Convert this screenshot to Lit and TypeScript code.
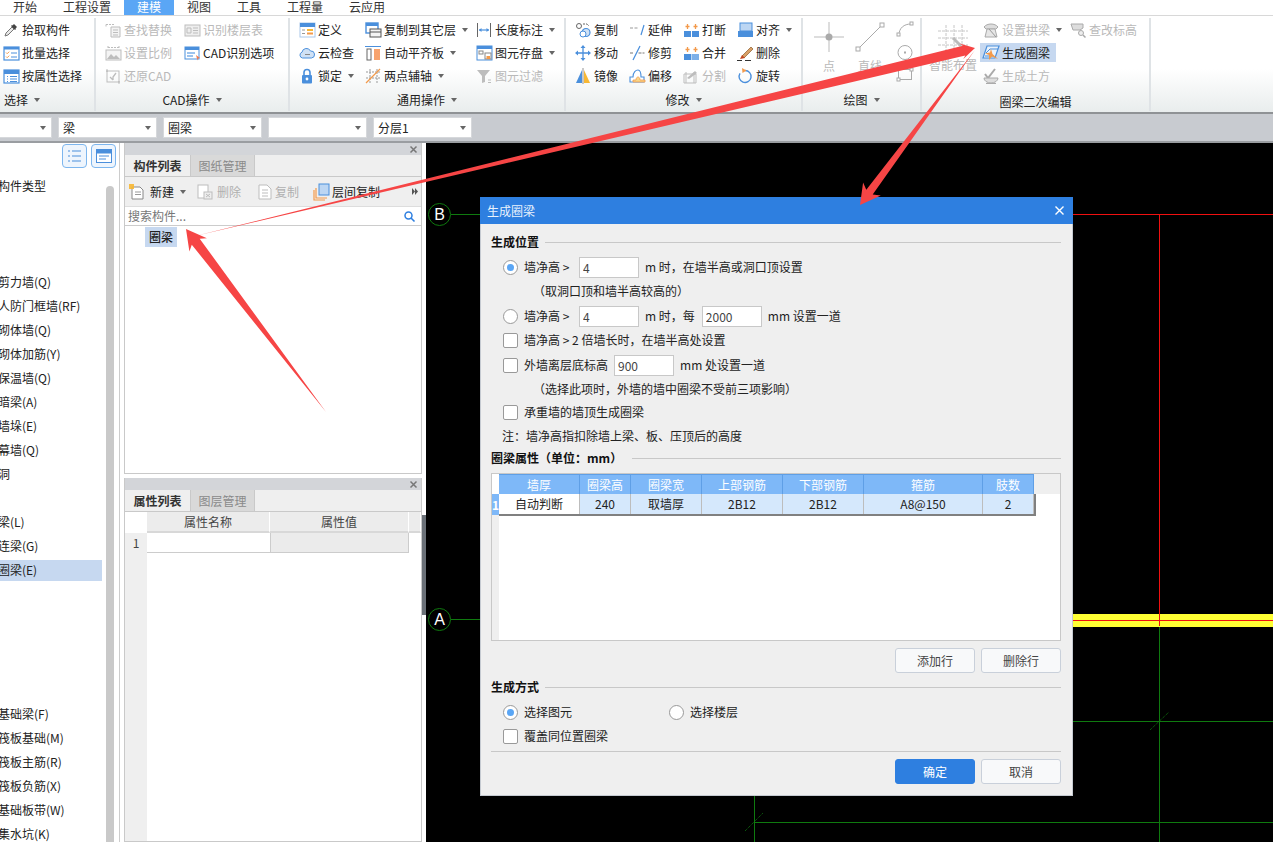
import { LitElement, html, css, svg } from "lit";
import { customElement } from "lit/decorators.js";

const B = "#4a8fdc", O = "#f39a4b", G = "#bdbdbd";
const icons: Record<string, any> = {
  pick: svg`<path d="M2 14l1-3 6-6 2 2-6 6z" fill="#e8e8e8" stroke="#777"/><path d="M9 4l2-2 3 3-2 2z" fill="#444"/><path d="M8.5 3.5l4 4" stroke="#444" stroke-width="1.4"/>`,
  batch: svg`<rect x="1" y="2" width="15" height="13" fill="#fff" stroke="${B}" stroke-width="1.2"/><rect x="1" y="2" width="15" height="2.5" fill="${B}"/><path d="M3 7.5l1.2 1.2 2-2M3 11.5l1.2 1.2 2-2" stroke="${O}" fill="none"/><path d="M8 8h6M8 12h6" stroke="${B}"/>`,
  attr: svg`<rect x="1" y="2" width="15" height="13" fill="#fff" stroke="${B}" stroke-width="1.2"/><rect x="1" y="2" width="15" height="4" fill="${B}"/><path d="M4 8.5h1M7 8.5h7M4 11h1M7 11h7M4 13.5h1M7 13.5h7" stroke="${B}"/>`,
  find: svg`<path d="M1 2.5h8M1 2.5v3" stroke="${G}" stroke-dasharray="2 1" fill="none"/><path d="M6 5h9v10H6z" fill="#f4f4f4" stroke="${G}"/><path d="M8 8h5M8 10.5h5M8 13h5" stroke="${G}"/>`,
  flr: svg`<rect x="1" y="3" width="15" height="11" fill="#eee" stroke="${G}"/><path d="M3 6h4v5H3zM9 6h5M9 8.500h5M9 11h5" stroke="${G}" fill="none"/>`,
  scale: svg`<rect x="1" y="5" width="15" height="10" fill="#f4f4f4" stroke="${G}"/><path d="M2 14l4-5 3 3 2-2 4 4z" fill="${G}"/><path d="M3 1v3M14 1v3M3 2.500h11" stroke="${G}" stroke-dasharray="2 1"/>`,
  cad: svg`<rect x="1" y="2" width="14" height="12" fill="#fff" stroke="${B}"/><rect x="1" y="2" width="14" height="3" fill="${B}"/><path d="M3 8h8M3 11h6" stroke="#9cc3ee" stroke-width="2"/><path d="M12 10l4 3-2 .5-.5 2z" fill="#f0794d"/>`,
  rest: svg`<rect x="2" y="3" width="12" height="11" fill="none" stroke="${G}"/><path d="M1 3h2M2 1v3M13 14h2M14 13v3" stroke="${G}"/><path d="M11 5l-3 4v3M5 9l3 3" stroke="${G}" stroke-width="1.3" fill="none"/>`,
  def: svg`<rect x="1" y="1" width="15" height="14" fill="#fff" stroke="#aac8ea"/><rect x="1" y="1" width="15" height="4" fill="${B}"/><rect x="8" y="7" width="6" height="2" fill="#f7b733"/><rect x="8" y="10.500" width="6" height="2" fill="${O}"/><path d="M3 8h3M3 11.500h3" stroke="#999"/>`,
  cloud: svg`<path d="M3.500 13a3 3 0 0 1-.5-5.800 4.500 4.500 0 0 1 8.500-1.200 3.500 3.500 0 0 1 1 7z" fill="#cfe1f5" stroke="${B}"/><path d="M6 9.500h5" stroke="#888"/>`,
  lock: svg`<path d="M5 7V4.500a3 3 0 0 1 6 0V7" fill="none" stroke="${B}" stroke-width="1.600"/><rect x="3" y="7" width="10" height="8.500" rx="1" fill="${B}"/><circle cx="8" cy="11" r="1.400" fill="#fff"/>`,
  copyto: svg`<rect x="1" y="1" width="12" height="10" fill="#fff" stroke="${B}" stroke-width="1.400"/><rect x="1" y="1" width="12" height="3" fill="${B}"/><rect x="5" y="7" width="11" height="8" fill="#f4f4f4" stroke="#555"/><path d="M5 10h11" stroke="#555"/>`,
  flat: svg`<path d="M0 1.500h16" stroke="${B}"/><rect x="2" y="4" width="4" height="11" fill="#fff" stroke="#666"/><rect x="9" y="4" width="6" height="11" fill="#f7a36e"/>`,
  two: svg`<path d="M1 4h14M1 10h14M5 1v14M12 1v14" stroke="#999" stroke-dasharray="2 1"/><path d="M1 15L15 1" stroke="${O}" stroke-width="1.200"/>`,
  len: svg`<path d="M1.500 1v14M14.500 1v14" stroke="#666"/><path d="M3 8h10" stroke="${B}" stroke-width="1.200"/><path d="M3 8l2.500-2v4zM13 8l-2.500-2v4z" fill="${B}"/>`,
  save: svg`<rect x="1" y="1" width="15" height="14" fill="#fff" stroke="${B}"/><rect x="1" y="1" width="15" height="3" fill="${B}"/><rect x="3" y="6" width="4" height="3" fill="none" stroke="#888"/><rect x="9" y="8" width="6" height="6" fill="#fff" stroke="#888"/><rect x="10.500" y="11" width="3.500" height="3" fill="${O}"/>`,
  filter: svg`<path d="M1 2h13L9 8v6l-3 1V8z" fill="${G}"/><path d="M12 12h3M12 14.500h3" stroke="${G}"/>`,
  copy: svg`<circle cx="11" cy="10.500" r="4" fill="#cfe1f5" stroke="${B}" stroke-width="1.200"/><circle cx="8" cy="12" r="3" fill="#fff" stroke="${B}"/><circle cx="4" cy="4" r="2.500" fill="#fff" stroke="#666"/><path d="M8 2h4l2 2" stroke="#666" fill="none" stroke-dasharray="2 1"/>`,
  ext: svg`<path d="M1 6h9" stroke="#999" stroke-dasharray="3 1.500"/><path d="M15 3l-3 10" stroke="${B}" stroke-width="1.200"/>`,
  brk: svg`<rect x="1" y="9" width="7" height="6" fill="${B}"/><rect x="9" y="9" width="7" height="6" fill="${B}"/><path d="M4.500 7V2M2.500 4.500h4M12.500 7V2M10.500 4.500h4" stroke="${O}" stroke-width="1.300"/>`,
  align: svg`<rect x="3" y="1" width="12" height="8" fill="#bcd6f3" stroke="${B}"/><rect x="1" y="9" width="15" height="6" fill="${B}"/>`,
  move: svg`<path d="M8 3v10M3 8h10" stroke="${B}" stroke-width="1.300"/><path d="M8 0l2.500 3h-5zM8 16l2.500-3h-5zM0 8l3-2.500v5zM16 8l-3-2.500v5z" fill="${B}"/>`,
  trim: svg`<path d="M1 8h4M9.500 8h6" stroke="#777" stroke-dasharray="3 1"/><path d="M4 15l7-14" stroke="${B}" stroke-width="1.200"/>`,
  merge: svg`<rect x="1" y="9" width="7" height="6" fill="${B}"/><rect x="8.500" y="9" width="7.500" height="6" fill="#7db0e8"/><path d="M4.500 7V2M2.500 4.500h4M12.500 7V2M10.500 4.500h4" stroke="${O}" stroke-width="1.300"/>`,
  del: svg`<path d="M5 11L14 2l2 2-9 9z" fill="#d9a066" stroke="#8a5a2b" stroke-width=".7"/><path d="M3 14l2-4 3 3z" fill="#c2461f"/><path d="M0 15.500h5M8 15.500h6" stroke="#333"/>`,
  mirror: svg`<path d="M7 2v13H1z" fill="${B}"/><path d="M9 2v13h6z" fill="#f7b733"/><path d="M8 0v16" stroke="#666" stroke-width=".7"/>`,
  offset: svg`<path d="M1 14V9h3c0-5 3-7 5-7s3 3 3 7h3v5z" fill="#fff" stroke="${B}" stroke-width="1.100"/><path d="M4 14v-2h3c0-2 1-3 2-3s2 1 2 3h5v2z" fill="#f7d689" stroke="${O}" stroke-width=".8"/>`,
  split: svg`<path d="M1 6h12v9H1zM3 15V4M11 15V4" stroke="${G}" fill="none"/><path d="M4 10l8-7 2 2-8 6z" fill="${G}"/>`,
  rotate: svg`<path d="M8 2.500a6 6 0 1 1-5 2.800" fill="none" stroke="${B}" stroke-width="1.400"/><path d="M5 0l4.500 2.500L5.500 5z" fill="${O}"/>`,
  arch: svg`<path d="M1 5c3-4 11-4 14 0l-2 2H3z" fill="#ddd" stroke="#aaa"/><path d="M4 7h8l2 8H2z" fill="#e6e6e6" stroke="#aaa"/><path d="M6 7l7 8" stroke="#999"/>`,
  elev: svg`<path d="M1 2h12v4l-3 2H3z" fill="#ddd" stroke="#aaa"/><circle cx="11" cy="11" r="2.500" fill="#eee" stroke="#aaa"/><path d="M13 13l2.500 2.500" stroke="#aaa" stroke-width="1.500"/>`,
  gen: svg`<path d="M4 1h12l-4 12H0z" fill="#eaf2fb" stroke="${B}" stroke-width="1.200"/><path d="M3 8l4-4h8M2 11h9" stroke="${B}" fill="none"/><path d="M8 4l1.500 5 5.500 5-6-2.500-3 3.500v-5l-4-1.500 5-1z" fill="${O}"/>`,
  earth: svg`<path d="M2 6l3 4 7-9" fill="none" stroke="#aaa" stroke-width="2"/><path d="M1 10h14a7 5 0 0 1-14 0z" fill="#ddd" stroke="#aaa"/><path d="M3 15.500h10" stroke="#aaa"/>`,
  neu: svg`<path d="M3 3h8l3 3v9H3z" fill="#fff" stroke="#888"/><path d="M6 8h6M6 10.500h6" stroke="#999"/><path d="M0 0h5v5H0z" fill="#f7b733" fill-opacity=".9"/>`,
  rem: svg`<rect x="1" y="1" width="10" height="13" fill="#fff" stroke="${G}"/><rect x="7" y="8" width="8" height="7" fill="#eee" stroke="${G}"/><path d="M9 10l4 3M13 10l-4 3" stroke="${G}"/>`,
  dup: svg`<path d="M2 1h8l4 4v10H2z" fill="#fff" stroke="${G}"/><path d="M5 6h6M5 9h6M5 12h6" stroke="${G}"/>`,
  fl: svg`<path d="M1 6v10h11" fill="none" stroke="${O}" stroke-width="1.200"/><path d="M3 4v10h11" fill="none" stroke="${O}" stroke-width="1.200"/><rect x="6" y="0" width="10" height="11" fill="#bcd6f3" stroke="${B}"/>`,
};
const ic = (n: string, s = 16) =>
  html`<svg class="ic" width=${s} height=${s} viewBox="0 0 16 16">${icons[n]}</svg>`;

type It = { i: string; t: string; off?: boolean; c?: boolean; hl?: boolean };
const it = (i: string, t: string, o: Partial<It> = {}): It => ({ i, t, ...o });
const groups: { cls: string; label: string; cols: { w: number; items: It[] }[] }[] = [
  { cls: "g1", label: "选择", cols: [{ w: 90, items: [it("pick", "拾取构件"), it("batch", "批量选择"), it("attr", "按属性选择")] }] },
  { cls: "g2", label: "CAD操作", cols: [
    { w: 79, items: [it("find", "查找替换", { off: true }), it("scale", "设置比例", { off: true }), it("rest", "还原CAD", { off: true })] },
    { w: 100, items: [it("flr", "识别楼层表", { off: true }), it("cad", "CAD识别选项")] },
  ] },
  { cls: "g3", label: "通用操作", cols: [
    { w: 66, items: [it("def", "定义"), it("cloud", "云检查"), it("lock", "锁定", { c: true })] },
    { w: 111, items: [it("copyto", "复制到其它层", { c: true }), it("flat", "自动平齐板", { c: true }), it("two", "两点辅轴", { c: true })] },
    { w: 88, items: [it("len", "长度标注", { c: true }), it("save", "图元存盘", { c: true }), it("filter", "图元过滤", { off: true })] },
  ] },
  { cls: "g4", label: "修改", cols: [
    { w: 54, items: [it("copy", "复制"), it("move", "移动"), it("mirror", "镜像")] },
    { w: 54, items: [it("ext", "延伸"), it("trim", "修剪"), it("offset", "偏移")] },
    { w: 54, items: [it("brk", "打断"), it("merge", "合并"), it("split", "分割", { off: true })] },
    { w: 62, items: [it("align", "对齐", { c: true }), it("del", "删除"), it("rotate", "旋转")] },
  ] },
];
const tabs = [["开始"], ["工程设置"], ["建模", "on"], ["视图"], ["工具"], ["工程量"], ["云应用"]];
const tree: [number, string, boolean?][] = [
  [0, "构件类型"], [4, "剪力墙(Q)"], [5, "人防门框墙(RF)"], [6, "砌体墙(Q)"], [7, "砌体加筋(Y)"], [8, "保温墙(Q)"],
  [9, "暗梁(A)"], [10, "墙垛(E)"], [11, "幕墙(Q)"], [12, "洞"], [14, "梁(L)"], [15, "连梁(G)"], [16, "圈梁(E)", true],
  [22, "基础梁(F)"], [23, "筏板基础(M)"], [24, "筏板主筋(R)"], [25, "筏板负筋(X)"], [26, "基础板带(W)"], [27, "集水坑(K)"],
];
const cols = ["墙厚", "圈梁高", "圈梁宽", "上部钢筋", "下部钢筋", "箍筋", "肢数"];
const vals = ["自动判断", "240", "取墙厚", "2B12", "2B12", "A8@150", "2"];

function arrow(tx: number, ty: number, px: number, py: number, L: number, W: number, S: number) {
  const d = Math.hypot(px - tx, py - ty), ux = (px - tx) / d, uy = (py - ty) / d, nx = -uy, ny = ux;
  const bx = px - ux * L, by = py - uy * L, sx = px - ux * L * 0.8, sy = py - uy * L * 0.8;
  const p = [
    [tx, ty], [sx + nx * S, sy + ny * S], [bx + nx * W, by + ny * W], [px, py],
    [bx - nx * W, by - ny * W], [sx - nx * S, sy - ny * S],
  ];
  return p.map((q) => q.map((v) => v.toFixed(1)).join(",")).join(" ");
}

@customElement("app-root")
export class AppRoot extends LitElement {
  static styles = css`
    :host { display: block; width: 1273px; height: 842px; overflow: hidden; position: relative; background: #fff;
      font: 12px/16px "Noto Sans CJK SC", "Noto Sans", sans-serif; color: #222; }
    * { box-sizing: border-box; }
    .ic { flex: none; display: block; overflow: visible; }
    .page { display: flex; flex-direction: column; height: 842px; }
    .tabs { display: flex; height: 16px; flex: none; background: #fff; border-bottom: 1px solid #d8d8d8; }
    .tab { padding: 0 13px; line-height: 14px; height: 15px; color: #333; }
    .tab.on { background: #5aa6f5; color: #fff; }
    .ribbon { display: flex; height: 98px; flex: none; padding-top: 2px;
      background: linear-gradient(#fff 55%, #e9eded); border-bottom: 2px solid #8f9295; }
    .grp { flex: none; display: flex; flex-direction: column; height: 93px; border-right: 2px solid #dfe3e6; }
    .g1 { width: 96px; } .g2 { width: 194px; } .g3 { width: 276px; } .g4 { width: 237px; } .g5 { width: 119px; } .g6 { width: 229px; }
    .cols { display: flex; height: 70px; padding-left: 9px; }
    .g1 .cols { padding-left: 3px; }
    .col { display: flex; flex-direction: column; flex: none; }
    .item { display: flex; align-items: center; gap: 3px; height: 23px; white-space: nowrap; }
    .item.off { color: #b9b9b9; }
    .item.hl { background: #c6d8f0; height: 19px; margin: 2px 0 2px -3px; padding-left: 3px; width: 76px; }
    .car { width: 0; height: 0; border: 3px solid transparent; border-top: 4px solid #666; border-bottom: 0; margin-left: 3px; flex: none; }
    .glabel { height: 23px; display: flex; align-items: center; justify-content: center; gap: 3px; color: #222; }
    .g1 .glabel { justify-content: flex-start; padding-left: 4px; }
    .g6 .glabel { padding-top: 4px; }
    .big { display: flex; flex-direction: column; align-items: center; color: #b9b9b9; flex: none; gap: 6px; }
    .w32 { width: 32px; } .w50 { width: 50px; }
    .smalls { display: flex; flex-direction: column; gap: 8px; flex: none; margin-left: 2px; }
    .g5 .cols { padding-left: 10px; gap: 9px; padding-top: 4px; }
    .g6 .cols { padding-left: 6px; }
    .g6 .big { padding-top: 7px; }
    .big-text { width: 50px; text-align: center; }
    .g6col { width: 87px; margin-left: 5px; }
    .tool { flex: none; height: 29px; background: #c8cbd0; border-bottom: 2px solid #9a9da1; display: flex; gap: 6px; padding: 3px 0 0; margin-left: -47px; }
    .combo { width: 99px; height: 21px; background: #fff; display: flex; align-items: center; justify-content: space-between; padding: 0 5px 0 4px; border: 1px solid #d6d8db; flex: none; }
    .main { flex: 1; display: flex; min-height: 0; position: relative; }
    .left { width: 120px; flex: none; border-right: 1px solid #ccc; display: flex; flex-direction: column; background: #fff; }
    .lhead { height: 31px; flex: none; display: flex; justify-content: flex-end; gap: 4px; padding: 1px 3px 0 0; }
    .lbtn { width: 25px; height: 24px; border: 1px solid #7db6ee; border-radius: 4px; background: #eef5fd; display: flex; align-items: center; justify-content: center; }
    .lbody { flex: 1; display: flex; min-height: 0; }
    .tree { width: 102px; flex: none; overflow: hidden; display: flex; flex-direction: column; }
    .node { height: 21px; flex: none; margin: 2px 0 1px; line-height: 20px; white-space: nowrap; text-indent: -2px; }
    .node.sel { background: #c6d8f0; }
    .thumb { width: 8px; margin: 12px 0 0 4px; background: #c9c9c9; border-radius: 4px 4px 0 0; flex: none; }
    .mid { width: 306px; flex: none; padding: 0 4px; display: flex; flex-direction: column; gap: 4px; background: #fff; position: relative; }
    .panel { border: 1px solid #c9c9c9; border-top: 0; display: flex; flex-direction: column; min-height: 0; background: #fff; }
    .p1 { height: 331px; flex: none; } .p2 { flex: 1; }
    .phead { height: 12px; background: #d3d5d9; display: flex; justify-content: flex-end; align-items: center; padding-right: 4px; flex: none; }
    .ptabs { height: 22px; display: flex; background: #efefef; border-bottom: 1px solid #c9c9c9; flex: none; }
    .ptab { width: 65px; text-align: center; line-height: 21px; font-weight: 700; color: #333; }
    .ptab.dim { background: #d9d9d9; color: #8a8a8a; border-left: 1px solid #c9c9c9; border-right: 1px solid #c9c9c9; font-weight: 400; }
    .ptool { height: 29px; background: #efefef; display: flex; align-items: center; padding-left: 4px; flex: none; }
    .pbtn { display: flex; align-items: center; gap: 5px; white-space: nowrap; }
    .pbtn.off { color: #b0b0b0; }
    .pbtn .car { margin-left: 1px; }
    .b2 { margin-left: 11px; gap: 4px; }
    .b3 { margin-left: 16px; gap: 2px; }
    .b4 { margin-left: 14px; gap: 3px; }
    .more { margin-left: auto; padding-right: 3px; }
    .search { height: 20px; flex: none; display: flex; align-items: center; justify-content: space-between; padding: 0 6px 0 3px; color: #777; border-bottom: 1px solid #ccc; border-top: 1px solid #ddd; }
    .rows { padding: 1px 0 0 20px; }
    .chip { display: inline-block; background: #c6d8f0; padding: 0 4px; height: 20px; line-height: 20px; font-weight: 500; }
    .pgrid { flex: 1; display: grid; grid-template-columns: 22px 123px 139px 1fr; grid-template-rows: 21px 20px 1fr; background: #fff; }
    .pgrid > div { display: flex; align-items: center; justify-content: center; color: #444; }
    .ph { background: #ececec; border-right: 1px solid #fff; border-bottom: 2px solid #d8d8d8; }
    .pno { background: #efefef; }
    .pv { background: #ebebeb; border-left: 1px solid #ccc; border-bottom: 1px solid #ccc; border-right: 1px solid #ccc; }
    .pk { background: #fff; border-bottom: 1px solid #ccc; }
    .span3 { grid-column: 2 / 5; }
    .collapse { position: absolute; right: 0; top: 372px; width: 4px; height: 100px; background: #6b7178; }
    .canvas { flex: 1; background: #000; position: relative; min-width: 0; overflow: hidden; }
    .draw { display: block; position: absolute; left: 0; top: 0; }
    .dlg { position: absolute; left: 54px; top: 54px; width: 593px; height: 599px; background: #efefef; border: 1px solid #c5cad1; border-top: 0; display: flex; flex-direction: column; }
    .dtitle { height: 27px; flex: none; margin: 0 -1px; background: #2e7fe0; color: #e8f2fd; display: flex; justify-content: space-between; align-items: center; padding: 0 9px 0 7px; }
    .dbody { padding: 6px 11px 0 10px; display: flex; flex-direction: column; flex: 1; }
    .sec { height: 24px; display: flex; align-items: center; gap: 6px; font-weight: 700; color: #111; white-space: nowrap; flex: none; }
    .sec i { flex: 1; height: 1px; background: #c8c8c8; }
    .sec.s2 { height: 22px; }
    .sec.s2 i { margin-left: 4px; }
    .r { height: 24px; display: flex; align-items: center; flex: none; padding-left: 12px; white-space: pre; color: #222; }
    .r.note { padding-left: 11px; }
    .m1 { margin-top: 1px; }
    .mn1 { margin-top: -1px; }
    .sub { padding-left: 42px; }
    .radio, .check { width: 15px; height: 15px; background: #fff; border: 1px solid #999; flex: none; margin-right: 6px; }
    .radio { border-radius: 50%; display: flex; align-items: center; justify-content: center; }
    .radio.on::after { content: ""; width: 7px; height: 7px; border-radius: 50%; background: #5aa6f5; }
    .check { border-radius: 2px; }
    input { width: 60px; height: 21px; border: 1px solid #c8c8c8; background: #fff; font: inherit; color: #444; padding: 0 3px; margin: 0 6px 0 7px; outline: none; flex: none; }
    input.i6 { margin-left: 6px; }
    .tbox { height: 168px; border: 1px solid #c8c8c8; background: #fff; display: flex; margin-top: 4px; flex: none; }
    .strip { width: 7px; flex: none; display: flex; flex-direction: column; background: #efefef; }
    .strip .top { height: 20px; background: #fff; }
    .strip .no { height: 21px; background: #7eb8f8; color: #fff; font-weight: 700; line-height: 21px; }
    .tmain { flex: 1; }
    .thead { display: flex; background: #efefef; height: 20px; }
    .th { background: #7eb8f8; color: #fff; text-align: center; line-height: 20px; border-right: 1px solid #5f9fe6; border-top: 1px solid #5f9fe6; flex: none; }
    .trow { display: inline-flex; height: 22px; border-bottom: 2px solid #808080; border-right: 2px solid #808080; }
    .td { background: #d5e8fc; text-align: center; line-height: 20px; border-right: 1px solid #bdbdbd; flex: none; color: #222; }
    .td.first { background: #fff; }
    .btns { display: flex; justify-content: flex-end; gap: 6px; margin-top: 7px; flex: none; }
    .btn { width: 80px; height: 25px; border: 1px solid #c9d0da; border-radius: 3px; background: #f8f9fa; text-align: center; line-height: 23px; color: #444; }
    .btn.pri { background: #2e7fe0; border-color: #2e7fe0; color: #fff; }
    .s3 { margin-top: 2px; }
    .hr { height: 1px; background: #c8c8c8; margin-top: 3px; flex: none; }
    .w166 { width: 166px; display: flex; align-items: center; }
    .arrows { position: absolute; left: 0; top: 0; pointer-events: none; }
  `;

  private item(i: It) {
    return html`<div class="item ${i.off ? "off" : ""} ${i.hl ? "hl" : ""}">${ic(i.i)}<span>${i.t}</span>${i.c ? html`<span class="car"></span>` : ""}</div>`;
  }

  private ribbon() {
    return html`<div class="ribbon">
      ${groups.map((g) => html`<div class="grp ${g.cls}">
        <div class="cols">${g.cols.map((c) => html`<div class="col" style="width:${c.w}px">${c.items.map((x) => this.item(x))}</div>`)}</div>
        <div class="glabel">${g.label}<span class="car"></span></div>
      </div>`)}
      <div class="grp g5">
        <div class="cols">
          <div class="big w32">
            <svg class="ic" width="30" height="30" viewBox="0 0 30 30"><path d="M15 0v30M0 15h30" stroke="#bbb"/><circle cx="15" cy="15" r="3.500" fill="#aaa"/></svg>
            <span>点</span>
          </div>
          <div class="big w32">
            <svg class="ic" width="30" height="30" viewBox="0 0 30 30"><path d="M3 27L27 3" stroke="#aaa"/><rect x="1" y="25" width="4" height="4" fill="#fff" stroke="#aaa"/><rect x="25" y="1" width="4" height="4" fill="#fff" stroke="#aaa"/></svg>
            <span>直线</span>
          </div>
          <div class="smalls">
            <svg class="ic" width="16" height="15" viewBox="0 0 16 15"><path d="M2 13C2 6 7 2 14 2" fill="none" stroke="#aaa"/><rect x="0" y="11" width="3" height="3" fill="#fff" stroke="#aaa"/><rect x="13" y="0" width="3" height="3" fill="#fff" stroke="#aaa"/></svg>
            <svg class="ic" width="16" height="15" viewBox="0 0 16 15"><circle cx="8" cy="7.500" r="7" fill="none" stroke="#aaa"/><rect x="7" y="6.500" width="2" height="2" fill="#aaa"/></svg>
            <svg class="ic" width="16" height="13" viewBox="0 0 16 13"><rect x="1.500" y="1.500" width="13" height="10" fill="none" stroke="#aaa"/><rect x="13" y="0" width="3" height="3" fill="#fff" stroke="#aaa"/><rect x="0" y="10" width="3" height="3" fill="#fff" stroke="#aaa"/></svg>
          </div>
        </div>
        <div class="glabel">绘图<span class="car"></span></div>
      </div>
      <div class="grp g6">
        <div class="cols">
          <div class="big w50">
            <svg class="ic" width="30" height="26" viewBox="0 0 30 26"><path d="M0 6h30M0 13h30M0 20h30M8 0v26M16 0v26M24 0v26" stroke="#c6c6c6" stroke-dasharray="3 1"/><path d="M15 13l8 8" stroke="#bbb" stroke-width="3"/></svg>
            <span class="big-text">智能布置</span>
          </div>
          <div class="col g6col">
            ${this.item(it("arch", "设置拱梁", { off: true, c: true }))}
            ${this.item(it("gen", "生成圈梁", { hl: true }))}
            ${this.item(it("earth", "生成土方", { off: true }))}
          </div>
          <div class="col">${this.item(it("elev", "查改标高", { off: true }))}</div>
        </div>
        <div class="glabel">圈梁二次编辑</div>
      </div>
    </div>`;
  }

  private tree() {
    const rows = [];
    for (let k = 0; k < 28; k++) {
      const n = tree.find((t) => t[0] === k);
      rows.push(html`<div class="node ${n && n[2] ? "sel" : ""}">${n ? n[1] : ""}</div>`);
    }
    return rows;
  }

  private closeX() {
    return html`<svg class="ic" width="7" height="7" viewBox="0 0 7 7"><path d="M.5.500l6 6M6.500.500l-6 6" stroke="#777" stroke-width="1.500"/></svg>`;
  }

  private mid() {
    return html`<div class="mid">
      <div class="panel p1">
        <div class="phead">${this.closeX()}</div>
        <div class="ptabs"><div class="ptab">构件列表</div><div class="ptab dim">图纸管理</div></div>
        <div class="ptool">
          <div class="pbtn">${ic("neu")}<span>新建</span><span class="car"></span></div>
          <div class="pbtn off b2">${ic("rem")}<span>删除</span></div>
          <div class="pbtn off b3">${ic("dup")}<span>复制</span></div>
          <div class="pbtn b4">${ic("fl")}<span>层间复制</span></div>
          <svg class="ic more" width="9" height="7" viewBox="0 0 6 7"><path d="M0 0l3 3.500-3 3.500zM3 0l3 3.500-3 3.500z" fill="#555"/></svg>
        </div>
        <div class="search"><span>搜索构件...</span>
          <svg class="ic" width="11" height="11" viewBox="0 0 11 11"><circle cx="4.500" cy="4.500" r="3.500" fill="none" stroke="#2e7fe0" stroke-width="1.500"/><path d="M7 7l3.500 3.500" stroke="#2e7fe0" stroke-width="1.600"/></svg>
        </div>
        <div class="rows"><span class="chip">圈梁</span></div>
      </div>
      <div class="panel p2">
        <div class="phead">${this.closeX()}</div>
        <div class="ptabs"><div class="ptab">属性列表</div><div class="ptab dim">图层管理</div></div>
        <div class="pgrid">
          <div></div><div class="ph">属性名称</div><div class="ph">属性值</div><div class="ph"></div>
          <div class="pno">1</div><div class="pk"></div><div class="pv"></div><div></div>
          <div class="pno"></div><div class="span3"></div>
        </div>
      </div>
      <div class="collapse"></div>
    </div>`;
  }

  private canvas() {
    const g = "#0f7a0f";
    return html`<div class="canvas">
      <svg class="draw" width="847" height="699" viewBox="426 143 847 699" font-family="Liberation Sans">
        <path d="M451 214.500H480M451 619.500H480M1073 721.500H1273M754.500 795V842M754 822.500H1273M1159.500 625V842" stroke="${g}" />
        <path d="M745 831L763 813M1150 730L1169 712" stroke="${g}" stroke-dasharray="1 1"/>
        <rect x="1073" y="614" width="200" height="13" fill="#ffff33"/>
        <path d="M1073 214.500H1273M1159.500 214V626M1073 620.500H1273" stroke="#f01010"/>
        <circle cx="439.500" cy="214.500" r="11" fill="none" stroke="${g}"/>
        <circle cx="439.500" cy="619.500" r="11" fill="none" stroke="${g}"/>
        <text x="439.500" y="220" fill="#fff" font-size="16" text-anchor="middle">B</text>
        <text x="439.500" y="625" fill="#fff" font-size="16" text-anchor="middle">A</text>
      </svg>
      ${this.dialog()}
    </div>`;
  }

  private dialog() {
    const w = [81, 51, 71, 81, 81, 119, 51];
    return html`<div class="dlg">
      <div class="dtitle"><span>生成圈梁</span>
        <svg class="ic" width="9" height="9" viewBox="0 0 9 9"><path d="M.5.500l8 8M8.500.500l-8 8" stroke="#fff" stroke-width="1.400"/></svg>
      </div>
      <div class="dbody">
        <div class="sec"><span>生成位置</span><i></i></div>
        <div class="r m1"><span class="radio on"></span>墙净高 &gt; <input value="4" />m 时，在墙半高或洞口顶设置</div>
        <div class="r sub">（取洞口顶和墙半高较高的）</div>
        <div class="r m1"><span class="radio"></span>墙净高 &gt; <input value="4" />m 时，每<input value="2000" />mm 设置一道</div>
        <div class="r"><span class="check"></span>墙净高 &gt; 2 倍墙长时，在墙半高处设置</div>
        <div class="r m1"><span class="check"></span>外墙离层底标高<input class="i6" value="900" />mm 处设置一道</div>
        <div class="r sub">（选择此项时，外墙的墙中圈梁不受前三项影响）</div>
        <div class="r mn1"><span class="check"></span>承重墙的墙顶生成圈梁</div>
        <div class="r note">注：墙净高指扣除墙上梁、板、压顶后的高度</div>
        <div class="sec s2 mn1"><span>圈梁属性（单位：mm）</span><i></i></div>
        <div class="tbox">
          <div class="strip"><div class="top"></div><div class="no">1</div></div>
          <div class="tmain">
            <div class="thead">${cols.map((c, i) => html`<div class="th" style="width:${w[i]}px">${c}</div>`)}</div>
            <div class="trow">${vals.map((c, i) => html`<div class="td ${i === 0 ? "first" : ""}" style="width:${w[i]}px">${c}</div>`)}</div>
          </div>
        </div>
        <div class="btns"><div class="btn">添加行</div><div class="btn">删除行</div></div>
        <div class="sec s3"><span>生成方式</span><i></i></div>
        <div class="r m1"><span class="w166"><span class="radio on"></span>选择图元</span><span class="radio"></span>选择楼层</div>
        <div class="r"><span class="check"></span>覆盖同位置圈梁</div>
        <div class="hr"></div>
        <div class="btns"><div class="btn pri">确定</div><div class="btn">取消</div></div>
      </div>
    </div>`;
  }

  render() {
    return html`<div class="page">
      <div class="tabs">${tabs.map((t) => html`<div class="tab ${t[1] ?? ""}">${t[0]}</div>`)}</div>
      ${this.ribbon()}
      <div class="tool">
        <div class="combo"><span></span><span class="car"></span></div>
        <div class="combo"><span>梁</span><span class="car"></span></div>
        <div class="combo"><span>圈梁</span><span class="car"></span></div>
        <div class="combo"><span></span><span class="car"></span></div>
        <div class="combo"><span>分层1</span><span class="car"></span></div>
      </div>
      <div class="main">
        <div class="left">
          <div class="lhead">
            <div class="lbtn"><svg class="ic" width="15" height="14" viewBox="0 0 15 14"><path d="M1 2h2M5 2h9M1 7h2M5 7h9M1 12h2M5 12h9" stroke="#4a8fdc" stroke-width="1.200"/></svg></div>
            <div class="lbtn"><svg class="ic" width="16" height="14" viewBox="0 0 16 14"><rect x=".5" y=".5" width="15" height="13" fill="#fff" stroke="#4a8fdc"/><rect x=".5" y=".5" width="15" height="4" fill="#4a8fdc"/><path d="M3 7h10M3 10h7" stroke="#4a8fdc"/></svg></div>
          </div>
          <div class="lbody"><div class="tree">${this.tree()}</div><div class="thumb"></div></div>
        </div>
        ${this.mid()}
        ${this.canvas()}
      </div>
      <svg class="arrows" width="1273" height="842" viewBox="0 0 1273 842">
        <polygon fill="#f64545" points=${arrow(326, 412, 186, 229, 20, 11, 5)} />
        <polygon fill="#f64545" points=${arrow(195, 236, 975, 48, 14, 8, 5)} />
        <polygon fill="#f64545" points=${arrow(975, 50, 860, 205, 20, 11, 4)} />
      </svg>
    </div>`;
  }
}
